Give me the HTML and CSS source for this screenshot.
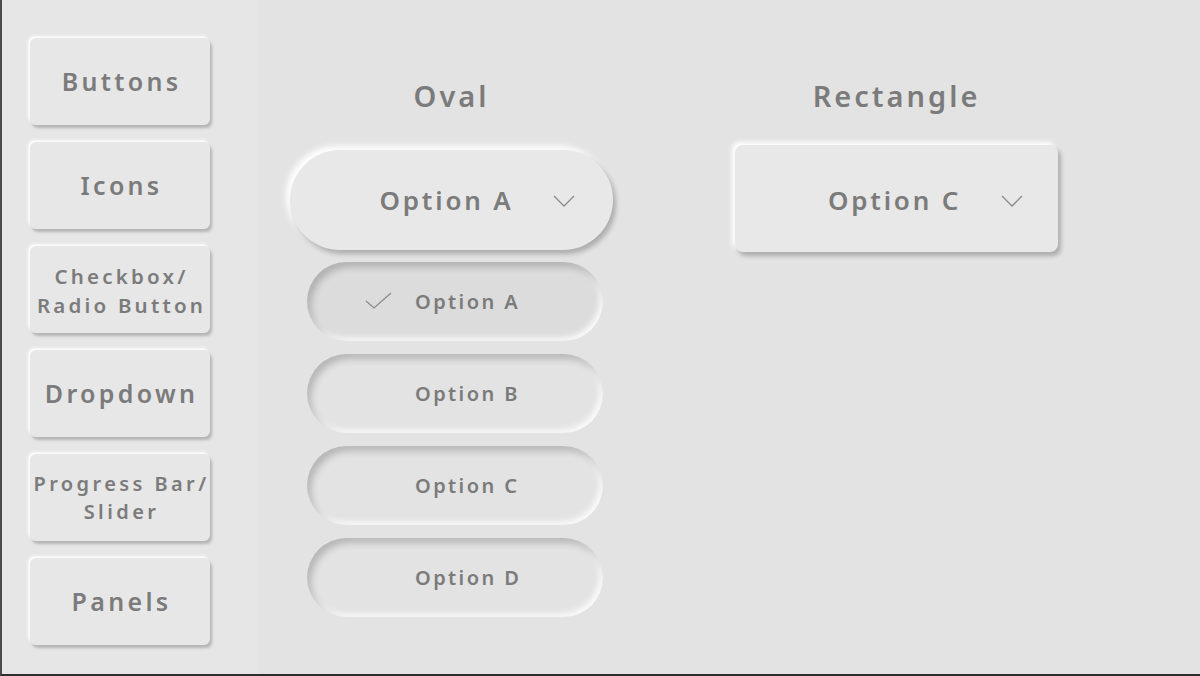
FILE: index.html
```html
<!DOCTYPE html>
<html>
<head>
<meta charset="utf-8">
<link rel="stylesheet" href="styles.css">
</head>
<body>
<div class="screen">
  <nav class="sidebar">
    <div class="nav-btn big">Buttons</div>
    <div class="nav-btn big">Icons</div>
    <div class="nav-btn small">Checkbox/<br>Radio Button</div>
    <div class="nav-btn big">Dropdown</div>
    <div class="nav-btn small tight">Progress Bar/<br>Slider</div>
    <div class="nav-btn big">Panels</div>
  </nav>
  <main class="main">
    <section class="col">
      <h2 class="col-title">Oval</h2>
      <div class="dd oval">
        <span class="dd-text">Option A</span>
        <svg class="chev" width="22" height="12" viewBox="0 0 22 12"><path d="M1 1 L11 11 L21 1" fill="none" stroke="#8a8a8a" stroke-width="1.3"/></svg>
      </div>
      <ul class="options">
        <li class="opt selected">
          <svg class="check" width="28" height="18" viewBox="0 0 28 18"><path d="M1 9 L9 16 L26 1" fill="none" stroke="#8a8a8a" stroke-width="1.3"/></svg>
          <span>Option A</span>
        </li>
        <li class="opt"><span>Option B</span></li>
        <li class="opt"><span>Option C</span></li>
        <li class="opt"><span>Option D</span></li>
      </ul>
    </section>
    <section class="col">
      <h2 class="col-title">Rectangle</h2>
      <div class="dd rect">
        <span class="dd-text">Option C</span>
        <svg class="chev" width="22" height="12" viewBox="0 0 22 12"><path d="M1 1 L11 11 L21 1" fill="none" stroke="#8a8a8a" stroke-width="1.3"/></svg>
      </div>
    </section>
  </main>
</div>
</body>
</html>
```
FILE: styles.css
```css
html, body {
  margin: 0;
  padding: 0;
  background: #e3e3e3;
}
.screen {
  width: 1198px;
  height: 674px;
  border-left: 2px solid #4d4a4a;
  border-bottom: 2px solid #2e2e2e;
  display: flex;
  font-family: "Noto Sans", "Noto Sans CJK JP", sans-serif;
  color: #7b7b7b;
  overflow: hidden;
}
.sidebar {
  width: 256px;
  background: #e6e6e6;
  padding: 38px 0 0 28px;
  box-sizing: border-box;
  display: flex;
  flex-direction: column;
  gap: 17px;
}
.nav-btn {
  width: 180px;
  height: 87px;
  box-sizing: border-box;
  border-radius: 6px;
  background: #e7e7e7;
  box-shadow: 2px 3px 3px rgba(0,0,0,0.22), -2px -2px 3px rgba(255,255,255,0.95);
  display: flex;
  align-items: center;
  justify-content: center;
  text-align: center;
  font-weight: 600;
}
.nav-btn.big {
  font-size: 25px;
  letter-spacing: 3.3px;
  padding-left: 3px;
  padding-bottom: 2px;
}
.nav-btn.small {
  font-size: 20.5px;
  letter-spacing: 3.2px;
  line-height: 29px;
  padding-left: 3px;
  padding-top: 2px;
}
.nav-btn.small.tight {
  font-size: 20px;
  letter-spacing: 3.4px;
  line-height: 27.5px;
  padding-top: 0;
}
.main {
  flex: 1;
  display: grid;
  grid-template-columns: 323px 323px;
  column-gap: 122px;
  padding-left: 32px;
  align-items: start;
}
.col {
  display: flex;
  flex-direction: column;
}
.col-title {
  margin: 0;
  height: 145px;
  box-sizing: border-box;
  padding-top: 76px;
  text-align: center;
  font-size: 29px;
  font-weight: 600;
  letter-spacing: 3px;
  line-height: 40px;
}
.dd {
  display: flex;
  align-items: center;
  justify-content: center;
  box-sizing: border-box;
  background: #e8e8e8;
  font-size: 26px;
  font-weight: 600;
  letter-spacing: 2.8px;
}
.dd.oval {
  height: 100px;
  margin-top: 5px;
  border-radius: 50px;
  box-shadow: 3px 4px 5px rgba(0,0,0,0.24), -4px -4px 6px rgba(255,255,255,1);
  padding-left: 52px;
}
.dd.rect {
  height: 107px;
  border-radius: 8px;
  box-shadow: 3px 4px 4px rgba(0,0,0,0.24), -3px -3px 5px rgba(255,255,255,1);
  padding-left: 58px;
  padding-top: 2px;
}
.dd-text {
  margin-right: 40px;
}
.chev {
  margin-top: 2px;
}
.options {
  list-style: none;
  margin: 12px 0 0 17px;
  padding: 0;
  display: flex;
  flex-direction: column;
  gap: 13px;
}
.opt {
  width: 296px;
  height: 79px;
  box-sizing: border-box;
  border-radius: 40px;
  background: #e3e3e3;
  box-shadow: inset 4px 5px 7px rgba(0,0,0,0.2), inset -3px -3px 6px rgba(255,255,255,0.9);
  display: flex;
  align-items: center;
  padding-left: 108px;
  font-size: 20px;
  font-weight: 600;
  letter-spacing: 2.4px;
  position: relative;
}
.opt.selected {
  background: #dcdcdc;
}
.check {
  position: absolute;
  left: 58px;
  top: 30px;
}
```
